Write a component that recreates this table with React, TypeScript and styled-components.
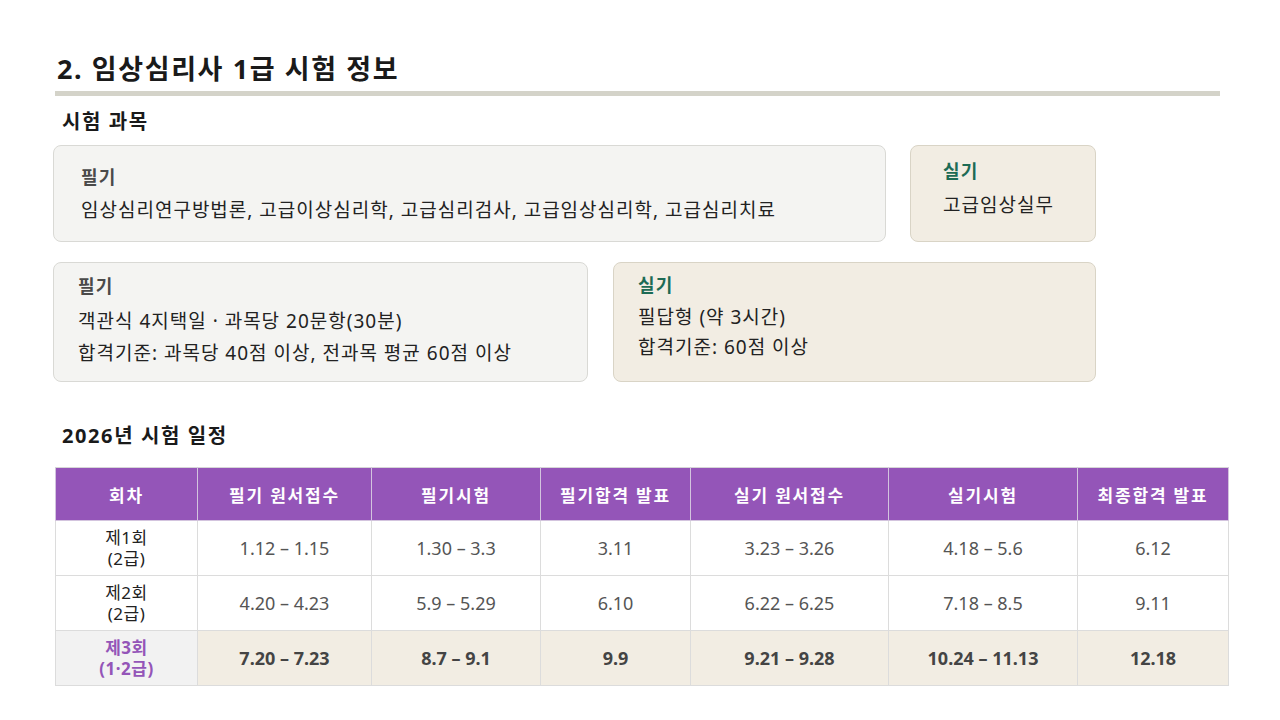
import styled, { createGlobalStyle } from "styled-components";

const GlobalStyle = createGlobalStyle`
  html, body {
    margin: 0;
    padding: 0;
    background: #ffffff;
  }
  body {
    font-family: "Noto Sans", "Noto Sans CJK KR", sans-serif;
    color: #222;
  }
`;

const Page = styled.div`
  width: 1280px;
  height: 720px;
  box-sizing: border-box;
  padding: 50px 0 0 53px;
  overflow: hidden;
`;

const Title = styled.h1`
  margin: 0 0 0 4px;
  font-size: 27px;
  font-weight: 700;
  letter-spacing: 1.6px;
  line-height: 38px;
  color: #1a1a1a;
`;

const TitleRule = styled.div`
  width: 1165px;
  height: 5px;
  margin: 3px 0 0 2px;
  background: #d4d3c9;
`;

const SectionTitle = styled.h2<{ $top: number }>`
  margin: ${(p) => p.$top}px 0 0 9px;
  font-size: 20px;
  font-weight: 700;
  letter-spacing: 1.6px;
  line-height: 28px;
  color: #1a1a1a;
`;

const CardRow = styled.div<{ $cols: string; $gap: number; $top: number }>`
  display: grid;
  grid-template-columns: ${(p) => p.$cols};
  gap: ${(p) => p.$gap}px;
  margin-top: ${(p) => p.$top}px;
`;

const Card = styled.div<{ $tone: "gray" | "beige"; $h: number; $pad: string }>`
  box-sizing: border-box;
  height: ${(p) => p.$h}px;
  padding: ${(p) => p.$pad};
  border-radius: 8px;
  border: 1px solid ${(p) => (p.$tone === "gray" ? "#d9d9d5" : "#d9d4c6")};
  background: ${(p) => (p.$tone === "gray" ? "#f4f4f2" : "#f2ede3")};
`;

const CardLabel = styled.div<{ $green?: boolean }>`
  font-size: 18px;
  font-weight: 700;
  letter-spacing: 1.2px;
  line-height: 26px;
  color: ${(p) => (p.$green ? "#1d6b55" : "#4a4a4a")};
`;

const CardText = styled.div<{ $lh: number; $top?: number }>`
  margin-top: ${(p) => p.$top ?? 0}px;
  font-size: 19px;
  letter-spacing: 1px;
  line-height: ${(p) => p.$lh}px;
  color: #222;
`;

const Table = styled.table`
  margin: 17px 0 0 2px;
  width: 1173px;
  border-collapse: collapse;
  table-layout: fixed;
`;

const Th = styled.th`
  height: 52px;
  padding: 0;
  background: #9455b8;
  color: #ffffff;
  font-size: 17px;
  font-weight: 700;
  letter-spacing: 1.8px;
  text-align: center;
  border: 1px solid #d3c4de;
  border-top-color: #d6d6d6;
`;

const Td = styled.td<{ $hl?: boolean; $first?: boolean }>`
  height: 54px;
  padding: 0;
  text-align: center;
  font-size: ${(p) => (p.$first ? 17 : 18)}px;
  letter-spacing: ${(p) => (p.$first ? 0.5 : 0)}px;
  line-height: 21px;
  border: 1px solid #dcdcdc;
  background: ${(p) => (p.$hl ? (p.$first ? "#f2f2f2" : "#f2ede3") : "#ffffff")};
  color: ${(p) =>
    p.$first ? (p.$hl ? "#9455b8" : "#222") : p.$hl ? "#444" : "#555"};
  font-weight: ${(p) => (p.$hl ? 700 : 400)};
`;

const widths = [142, 174, 169, 150, 198, 189, 151];
const headers = [
  "회차",
  "필기 원서접수",
  "필기시험",
  "필기합격 발표",
  "실기 원서접수",
  "실기시험",
  "최종합격 발표",
];

const rows = [
  {
    round: ["제1회", "(2급)"],
    cells: ["1.12 – 1.15", "1.30 – 3.3", "3.11", "3.23 – 3.26", "4.18 – 5.6", "6.12"],
  },
  {
    round: ["제2회", "(2급)"],
    cells: ["4.20 – 4.23", "5.9 – 5.29", "6.10", "6.22 – 6.25", "7.18 – 8.5", "9.11"],
  },
  {
    round: ["제3회", "(1·2급)"],
    cells: ["7.20 – 7.23", "8.7 – 9.1", "9.9", "9.21 – 9.28", "10.24 – 11.13", "12.18"],
    hl: true,
  },
];

export default function App() {
  return (
    <>
      <GlobalStyle />
      <Page>
        <Title>2. 임상심리사 1급 시험 정보</Title>
        <TitleRule />
        <SectionTitle $top={12}>시험 과목</SectionTitle>

        <CardRow $cols="833px 186px" $gap={24} $top={9}>
          <Card $tone="gray" $h={97} $pad="18px 0 0 27px">
            <CardLabel>필기</CardLabel>
            <CardText $lh={40}>
              임상심리연구방법론, 고급이상심리학, 고급심리검사, 고급임상심리학, 고급심리치료
            </CardText>
          </Card>
          <Card $tone="beige" $h={97} $pad="12px 0 0 32px">
            <CardLabel $green>실기</CardLabel>
            <CardText $lh={34} $top={4}>
              고급임상실무
            </CardText>
          </Card>
        </CardRow>

        <CardRow $cols="535px 483px" $gap={25} $top={20}>
          <Card $tone="gray" $h={120} $pad="10px 0 0 24px">
            <CardLabel>필기</CardLabel>
            <CardText $lh={32} $top={6}>
              객관식 4지택일 · 과목당 20문항(30분)
              <br />
              합격기준: 과목당 40점 이상, 전과목 평균 60점 이상
            </CardText>
          </Card>
          <Card $tone="beige" $h={120} $pad="9px 0 0 24px">
            <CardLabel $green>실기</CardLabel>
            <CardText $lh={30} $top={4}>
              필답형 (약 3시간)
              <br />
              합격기준: 60점 이상
            </CardText>
          </Card>
        </CardRow>

        <SectionTitle $top={40}>2026년 시험 일정</SectionTitle>

        <Table>
          <colgroup>
            {widths.map((w, i) => (
              <col key={i} style={{ width: w }} />
            ))}
          </colgroup>
          <thead>
            <tr>
              {headers.map((h) => (
                <Th key={h}>{h}</Th>
              ))}
            </tr>
          </thead>
          <tbody>
            {rows.map((r) => (
              <tr key={r.round[0]}>
                <Td $first $hl={r.hl}>
                  {r.round[0]}
                  <br />
                  {r.round[1]}
                </Td>
                {r.cells.map((c, i) => (
                  <Td key={i} $hl={r.hl}>
                    {c}
                  </Td>
                ))}
              </tr>
            ))}
          </tbody>
        </Table>
      </Page>
    </>
  );
}
